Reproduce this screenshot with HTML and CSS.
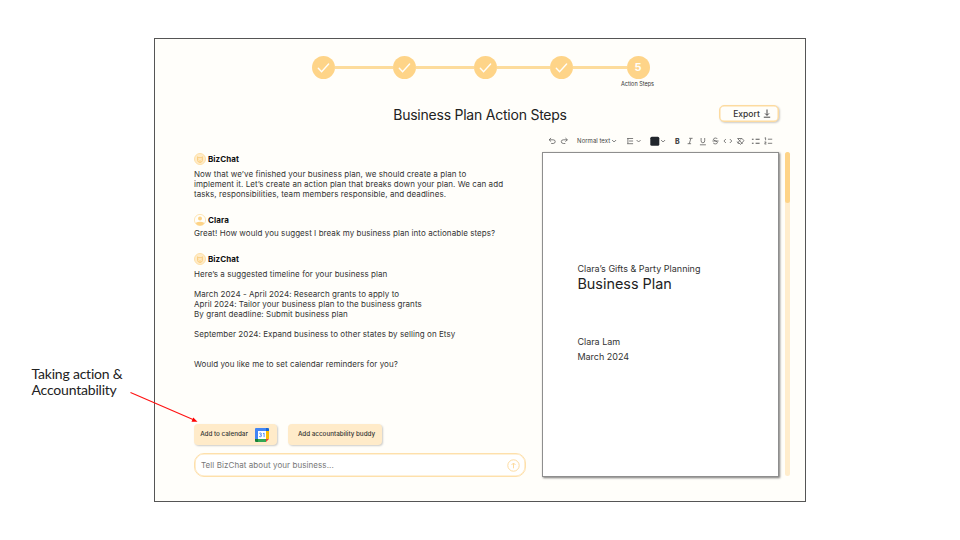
FILE: index.html
```
<!DOCTYPE html>
<html lang="en">
<head>
<meta charset="utf-8">
<title>Business Plan Action Steps</title>
<link rel="stylesheet" href="styles.css">
</head>
<body>
<svg width="0" height="0" class="defs">
  <symbol id="check" viewBox="0 0 23 23"><path d="M6.3 12.3l3.3 3.5 7-7.8"/></symbol>
  <symbol id="chev" viewBox="0 0 6 6"><path d="M1 2l2 2 2-2"/></symbol>
  <symbol id="bot" viewBox="0 0 12 12"><circle cx="6" cy="6" r="5.5" fill="#ffecc9" stroke="#fddfa6"/><path d="M3.6 3.5v4q.5 2 2.4 2t2.4-2v-4M4 4.7h4M4.7 6.6h.4M6.9 6.6h.4M4.8 8h2.4" fill="none" stroke="#fbcb75" stroke-width=".9"/></symbol>
</svg>
<aside class="note">Taking action &amp;<br>Accountability</aside>
<main class="frame">
  <nav class="stepper">
    <span class="step"><svg><use href="#check"/></svg></span><i class="bar"></i>
    <span class="step"><svg><use href="#check"/></svg></span><i class="bar"></i>
    <span class="step"><svg><use href="#check"/></svg></span><i class="bar short"></i>
    <span class="step"><svg><use href="#check"/></svg></span><i class="bar short last"></i>
    <span class="step">5<small>Action Steps</small></span>
  </nav>
  <header class="head">
    <h1>Business Plan Action Steps</h1>
    <button class="export">Export <svg width="8" height="9" viewBox="0 0 8 9"><path d="M4 .5v5.7M2 4.4l2 2 2-2M.8 8.2h6.4"/></svg></button>
  </header>
  <div class="columns">
    <section class="chat">
      <article class="first">
        <h2><svg width="12" height="12"><use href="#bot"/></svg><b>BizChat</b></h2>
        <p>Now that we’ve finished your business plan, we should create a plan to<br>implement it. Let’s create an action plan that breaks down your plan. We can add<br>tasks, responsibilities, team members responsible, and deadlines.</p>
      </article>
      <article class="clara">
        <h2><svg width="12" height="12" viewBox="0 0 12 12"><circle cx="6" cy="6" r="5.6" fill="#fffefa" stroke="#fddfa6" stroke-width=".8"/><circle cx="6" cy="4.4" r="2" fill="#fdd386"/><path d="M1.5 9q4.5-2.6 9 0Q9 11.5 6 11.5T1.5 9z" fill="#fdd386"/></svg><b>Clara</b></h2>
        <p>Great! How would you suggest I break my business plan into actionable steps?</p>
      </article>
      <article class="plan">
        <h2><svg width="12" height="12"><use href="#bot"/></svg><b>BizChat</b></h2>
        <p>Here’s a suggested timeline for your business plan<br><br>March 2024 - April 2024: Research grants to apply to<br>April 2024: Tailor your business plan to the business grants<br>By grant deadline: Submit business plan<br><br>September 2024: Expand business to other states by selling on Etsy<br><br><br>Would you like me to set calendar reminders for you?</p>
      </article>
      <div class="actions">
        <button class="cal">Add to calendar
          <svg width="14" height="14" viewBox="0 0 14 14"><path d="M0 1q0-1 1-1h10v3H3v8H0z" fill="#4285f4"/><path d="M11 0h2q1 0 1 1v2h-3z" fill="#1967d2"/><path d="M11 3h3v8h-3z" fill="#fbbc04"/><path d="M3 11h8v3H3z" fill="#34a853"/><path d="M0 11h3v3H1q-1 0-1-1z" fill="#188038"/><path d="M11 11h3l-3 3z" fill="#ea4335"/><path d="M3 3h8v8H3z" fill="#fff"/><path d="M4.3 5.3q2.2-1 2.2.5 0 1-1.2 1 1.4.1 1.3 1.2-.4 1.4-2.4.5M8 5.7l1.1-.6v4" fill="none" stroke="#4285f4" stroke-width=".9"/></svg></button>
        <button class="buddy">Add accountability buddy</button>
      </div>
      <div class="prompt"><span>Tell BizChat about your business...</span>
        <svg width="13" height="13" viewBox="0 0 13 13"><circle cx="6.5" cy="6.5" r="5.7"/><path d="M6.5 9.3V4M4.5 6l2-2 2 2"/></svg></div>
    </section>
    <section class="editor">
      <svg class="tools" width="236" height="12" viewBox="542.4 135 236 12">
        <path d="M551.5 138l-2 1.8 2 1.8M549.6 139.8h4q2 0 2 1.8t-2 1.9h-2"/>
        <path d="M565.8 138l2 1.8-2 1.8M567.7 139.8h-4q-2 0-2 1.8t2 1.9h2"/>
        <text class="normal" x="577.5" y="143.4" textLength="33">Normal text</text>
        <use href="#chev" x="611.5" y="138" width="6" height="6"/>
        <path d="M627.5 138.5h6M629.5 141h4M627.5 143.7h6M628.3 138.5v5"/>
        <use href="#chev" x="636" y="138" width="6" height="6"/>
        <rect x="650.7" y="136.7" width="9" height="9" rx="1.5" class="swatch"/>
        <use href="#chev" x="660.5" y="138" width="6" height="6"/>
        <text x="675.3" y="143.8" class="bold">B</text>
        <path d="M689.5 138.3h3.5M688 143.7h3.5M691.3 138.3l-1.6 5.4"/>
        <path d="M701.5 138v2.8q0 2 1.8 2t1.8-2V138M700.3 144.8h6"/>
        <path d="M717.8 139q-.5-1-2-1t-2 1.2q0 1 2 1.7 2.2.6 2 1.8-.3 1.2-2 1.2t-2.2-1M712.8 141h6.2"/>
        <path d="M726.3 139l-2 2 2 2M730.2 139l2 2-2 2"/>
        <path d="M738 138.5h4.5l1.8 2.2-3.3 3.7-2.5-2 2.8-3M738 138.5l5 5.5M737.5 141.5l1.5 2.5"/>
        <path d="M756 139.2h4M756 143.3h4M752.3 139.2h1.7M752.3 143.3h1.7" class="thick"/>
        <path d="M768.3 139.2h4.3M768.3 143.3h4.3M765 138l1-.3v2.6M764.8 142h1.8l-1.6 2h1.8"/>
      </svg>
      <div class="page">
        <p class="owner">Clara’s Gifts &amp; Party Planning</p>
        <p class="doc">Business Plan</p>
        <p class="author">Clara Lam</p>
        <p class="date">March 2024</p>
      </div>
    </section>
    <div class="scroll"><i></i></div>
  </div>
</main>
<svg class="arrow" width="70" height="34" viewBox="130 390 70 34"><path d="M130.5 392.5L193 419.5" stroke="#f11" stroke-width="1.1" fill="none"/><path d="M197.5 421.8l-6-.1 1.8-4.2z" fill="#f00"/></svg>
</body>
</html>
```
FILE: styles.css
```
* { box-sizing: border-box; }
body { margin: 0; width: 960px; height: 540px; overflow: hidden; background: #fff; display: flex; font-family: Inter, "Liberation Sans", sans-serif; color: #333; }
h1, h2, p { margin: 0; font-weight: 400; }
button { font: inherit; color: inherit; border: 0; padding: 0; }
svg { flex: none; display: block; }
.defs { position: absolute; }
.note { width: 154px; padding: 366px 0 0 31.5px; font: 14px/16px Lato, sans-serif; letter-spacing: -.2px; color: #222; white-space: nowrap; }
.frame { width: 652px; height: 464px; margin-top: 38px; border: 1px solid #555; background: #fffefa; display: flex; flex-direction: column; }
.stepper { display: flex; align-items: center; padding: 16.5px 0 0 156.5px; height: 40px; }
.step { position: relative; flex: none; width: 23px; height: 23px; border-radius: 50%; background: #fed488; color: #fffefa; font-size: 11px; font-weight: 700; line-height: 23px; text-align: center; }
.step svg { width: 23px; height: 23px; fill: none; stroke: #fffefa; stroke-width: 1.4; stroke-linecap: round; }
.step small { position: absolute; top: 24px; left: -9px; width: 40px; font-size: 5.5px; font-weight: 400; line-height: 8px; color: #333; white-space: nowrap; }
.bar { width: 58px; height: 3px; background: #fddc9c; }
.bar.short { width: 53px; }
.bar.last { width: 54px; }
.head { position: relative; display: flex; justify-content: center; height: 51px; padding-top: 26px; }
h1 { font-size: 14px; line-height: 20px; letter-spacing: -.23px; color: #222; white-space: nowrap; }
.export { position: absolute; left: 564px; top: 26px; width: 60px; height: 17px; border: 1px solid #fddba0; border-radius: 5px; background: #fffefa; box-shadow: inset 0 0 0 .5px #fddba0, 1px 1px 2px #0003; font-size: 8.5px; font-weight: 500; display: flex; align-items: center; justify-content: center; gap: 3px; padding-left: 6px; }
.export svg { fill: none; stroke: #333; stroke-width: .9; }
.columns { display: flex; padding-left: 39px; height: 371px; }
.chat { width: 333px; margin-right: 15.4px; padding-top: 23px; font-size: 8px; line-height: 10px; letter-spacing: .063px; white-space: nowrap; }
.chat h2 { display: flex; align-items: center; gap: 2px; height: 12px; font-size: 8px; line-height: 12px; color: #111; }
.first { height: 61px; }
.first p { padding-top: 4.4px; }
.clara { height: 39px; }
.clara p { padding-top: 2px; }
.plan { height: 171px; }
.plan p { padding-top: 4px; }
.actions { display: flex; gap: 11px; }
.actions button { height: 21px; border-radius: 4px; background: #ffebc9; box-shadow: 1px 1px 2px #0003; font-size: 6.3px; letter-spacing: 0; font-weight: 500; line-height: 21px; display: flex; align-items: center; justify-content: center; }
.actions .cal { width: 83px; gap: 7px; padding-right: 2px; }
.actions .buddy { width: 94px; padding-left: 3px; }
.prompt { margin-top: 8.4px; width: 332px; height: 24px; border: 1px solid #fee0ab; box-shadow: inset 0 0 0 .6px #fee3b3; border-radius: 10px; background: #fff; color: #777; display: flex; align-items: center; justify-content: space-between; padding: 0 5px 0 6px; font-size: 8px; }
.prompt span { letter-spacing: .07px; }
.prompt svg { fill: none; stroke: #fddba0; }
.editor { width: 237px; padding-top: 5px; }
.tools { fill: none; stroke: #555; stroke-width: .75; }
.tools text { fill: #444; stroke: none; font-size: 6px; }
.tools .bold { font-size: 7px; font-weight: 800; }
.tools .swatch { fill: #21262c; stroke: none; }
.tools .thick { stroke-width: 1.1; }
.page { margin-top: 5px; height: 325px; border: 1px solid #8e8e8e; background: #fff; box-shadow: 1px 1px 2px #0008; padding: 110px 0 0 34px; white-space: nowrap; }
.owner { font-size: 9px; line-height: 12px; }
.doc { font-size: 14.4px; line-height: 17px; color: #222; }
.author, .date { font-size: 9px; line-height: 12px; }
.author { margin-top: 43.5px; }
.date { margin-top: 3.5px; }
.scroll { width: 5px; height: 324px; margin: 22px 0 0 5.6px; border-radius: 3px; background: #ffedcd; }
.scroll i { display: block; height: 51px; border-radius: 3px; background: #fed488; }
.arrow { position: absolute; left: 130px; top: 390px; }
```
